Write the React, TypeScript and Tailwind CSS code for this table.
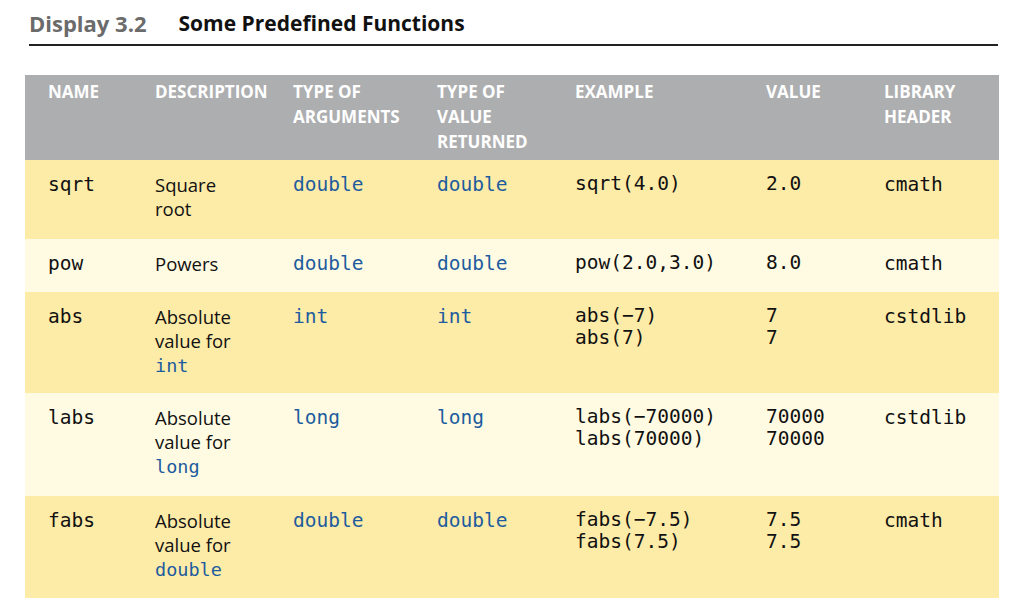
import React from 'react';

type Cell = React.ReactNode;

interface Row {
  name: string;
  desc: Cell;
  arg: string;
  ret: string;
  example: string[];
  value: string[];
  lib: string;
  bg: string;
  h: string;
}

const mono = "font-['DejaVu_Sans_Mono',monospace]";
const blue = 'text-[#1d5c9e]';

const rows: Row[] = [
  {
    name: 'sqrt',
    desc: <>Square<br />root</>,
    arg: 'double',
    ret: 'double',
    example: ['sqrt(4.0)'],
    value: ['2.0'],
    lib: 'cmath',
    bg: 'bg-[#fdeba8]',
    h: 'h-[79px]',
  },
  {
    name: 'pow',
    desc: <>Powers</>,
    arg: 'double',
    ret: 'double',
    example: ['pow(2.0,3.0)'],
    value: ['8.0'],
    lib: 'cmath',
    bg: 'bg-[#fffbe3]',
    h: 'h-[53px]',
  },
  {
    name: 'abs',
    desc: <>Absolute<br />value for<br /><span className={`${mono} ${blue}`}>int</span></>,
    arg: 'int',
    ret: 'int',
    example: ['abs(−7)', 'abs(7)'],
    value: ['7', '7'],
    lib: 'cstdlib',
    bg: 'bg-[#fdeba8]',
    h: 'h-[101px]',
  },
  {
    name: 'labs',
    desc: <>Absolute<br />value for<br /><span className={`${mono} ${blue}`}>long</span></>,
    arg: 'long',
    ret: 'long',
    example: ['labs(−70000)', 'labs(70000)'],
    value: ['70000', '70000'],
    lib: 'cstdlib',
    bg: 'bg-[#fffbe3]',
    h: 'h-[103px]',
  },
  {
    name: 'fabs',
    desc: <>Absolute<br />value for<br /><span className={`${mono} ${blue}`}>double</span></>,
    arg: 'double',
    ret: 'double',
    example: ['fabs(−7.5)', 'fabs(7.5)'],
    value: ['7.5', '7.5'],
    lib: 'cmath',
    bg: 'bg-[#fdeba8]',
    h: 'h-[102px]',
  },
];

const cols = 'grid grid-cols-[130px_138px_144px_138px_191px_118px_115px]';

export default function App() {
  return (
    <div className="h-[613px] w-[1024px] overflow-hidden bg-white font-['Open_Sans',sans-serif]">
      {/* ── Título ── */}
      <div className="mr-[26px] ml-[29px] flex items-end gap-[32px] border-b-2 border-[#222] pt-[9px] pb-[6px] font-bold leading-[29px]">
        <span className="text-[22px] text-[#6b6b6b]">Display 3.2</span>
        <span className="text-[21px] text-[#111]">Some Predefined Functions</span>
      </div>

      <div className="ml-[25px] mt-[29px] w-[974px]">
        {/* Cabeçalho */}
        <div className={`${cols} h-[85px] bg-[#adaeb0] pt-[4px] text-[17px] font-bold uppercase leading-[25px] text-white`}>
          <div className="pl-[23px]">Name</div>
          <div>Description</div>
          <div>Type of<br />Arguments</div>
          <div>Type of<br />Value<br />Returned</div>
          <div>Example</div>
          <div>Value</div>
          <div>Library<br />Header</div>
        </div>

        {/* Linhas */}
        {rows.map((r) => (
          <div key={r.name} className={`${cols} ${r.h} ${r.bg} pt-[13px] text-[#111]`}>
            <div className={`${mono} pl-[23px] text-[19.5px] leading-[24px]`}>{r.name}</div>
            <div className="text-[18.5px] leading-[24px]">{r.desc}</div>
            <div className={`${mono} ${blue} text-[19.5px] leading-[24px]`}>{r.arg}</div>
            <div className={`${mono} ${blue} text-[19.5px] leading-[24px]`}>{r.ret}</div>
            <div className={`${mono} text-[19.5px] leading-[22px]`}>
              {r.example.map((e) => (
                <div key={e}>{e}</div>
              ))}
            </div>
            <div className={`${mono} text-[19.5px] leading-[22px]`}>
              {r.value.map((v, i) => (
                <div key={i}>{v}</div>
              ))}
            </div>
            <div className={`${mono} text-[19.5px] leading-[24px]`}>{r.lib}</div>
          </div>
        ))}
      </div>
    </div>
  );
}
